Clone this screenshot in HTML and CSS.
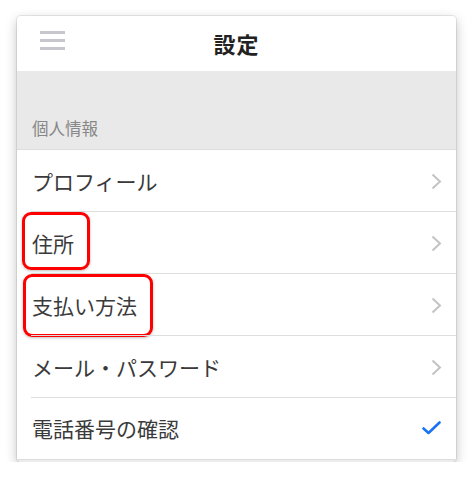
FILE: index.html
```html
<!DOCTYPE html>
<html lang="ja">
<head>
<meta charset="utf-8">
<link rel="stylesheet" href="styles.css">
</head>
<body>
<div class="card">
  <header class="header">
    <span class="menu"><i></i><i></i><i></i></span>
    <h1 class="title">設定</h1>
  </header>
  <div class="section">個人情報</div>
  <ul class="list">
    <li class="row"><span class="label">プロフィール</span><svg class="chev" width="11" height="17" viewBox="0 0 11 17"><path d="M1.5 1.5 L9 8.5 L1.5 15.5" fill="none" stroke="#c3c3c3" stroke-width="2"/></svg></li>
    <li class="row"><span class="label">住所</span><svg class="chev" width="11" height="17" viewBox="0 0 11 17"><path d="M1.5 1.5 L9 8.5 L1.5 15.5" fill="none" stroke="#c3c3c3" stroke-width="2"/></svg><span class="mark mark-a"></span></li>
    <li class="row"><span class="label">支払い方法</span><svg class="chev" width="11" height="17" viewBox="0 0 11 17"><path d="M1.5 1.5 L9 8.5 L1.5 15.5" fill="none" stroke="#c3c3c3" stroke-width="2"/></svg><span class="mark mark-b"></span></li>
    <li class="row"><span class="label">メール・パスワード</span><svg class="chev" width="11" height="17" viewBox="0 0 11 17"><path d="M1.5 1.5 L9 8.5 L1.5 15.5" fill="none" stroke="#c3c3c3" stroke-width="2"/></svg></li>
    <li class="row last"><span class="label">電話番号の確認</span>
      <svg class="check" width="19" height="14" viewBox="0 0 19 14"><path d="M1.5 7.5 L6.5 12 L17.5 1.5" fill="none" stroke="#1a74f2" stroke-width="2.6" stroke-linecap="round" stroke-linejoin="round"/></svg>
    </li>
  </ul>
</div>
</body>
</html>
```
FILE: styles.css
```css
html, body {
  margin: 0;
  padding: 0;
  background: #ffffff;
}
body {
  font-family: "Noto Sans CJK JP", "Noto Sans", sans-serif;
  padding: 16px 0 0 17px;
}
.card {
  width: 439px;
  border-radius: 4px;
  box-shadow: 0 0 0 1px rgba(0,0,0,0.08), 0 4px 12px rgba(0,0,0,0.25);
  overflow: hidden;
  padding-bottom: 2px;
  background-color: #ececec;
}
.header {
  height: 55px;
  background: #fff;
  display: flex;
  align-items: center;
  justify-content: center;
  position: relative;
}
.menu {
  position: absolute;
  left: 23px;
  top: 15px;
  width: 25px;
  display: flex;
  flex-direction: column;
  gap: 5.5px;
}
.menu i {
  display: block;
  height: 2.5px;
  background: #c6c6cc;
}
.title {
  margin: 0;
  font-size: 22px;
  font-weight: 700;
  color: #222;
  letter-spacing: 1px;
  line-height: 1;
  margin-top: -2px;
}
.section {
  height: 79px;
  background: #e9e9e9;
  box-sizing: border-box;
  padding: 0 0 9px 15px;
  display: flex;
  align-items: flex-end;
  font-size: 16.5px;
  color: #878787;
  border-bottom: 1px solid #dcdcdc;
}
.list {
  list-style: none;
  margin: 0;
  padding: 0;
  background: #fff;
  border-bottom: 1px solid #dcdcdc;
}
.row {
  position: relative;
  height: 62px;
  display: flex;
  align-items: center;
  padding: 0 0 0 15px;
}
.row::after {
  content: "";
  position: absolute;
  left: 14px;
  right: 0;
  bottom: 0;
  height: 1px;
  background: #dedede;
}
.row.last {
  height: 61px;
}
.row.last::after {
  display: none;
}
.label {
  flex: 1;
  font-size: 21px;
  color: #3a3a3a;
  margin-top: -1px;
}
.chev {
  margin-right: 14px;
}
.check {
  margin-right: 15px;
  margin-top: -1px;
}
.mark {
  position: absolute;
  top: 0;
  border: 3px solid #ff0000;
  border-radius: 9px;
  box-sizing: border-box;
  box-shadow: 0 1px 3px rgba(0,0,0,0.25);
}
.mark-a {
  left: 5px;
  width: 68px;
  height: 58px;
}
.mark-b {
  left: 6px;
  width: 130px;
  height: 63px;
}
```
